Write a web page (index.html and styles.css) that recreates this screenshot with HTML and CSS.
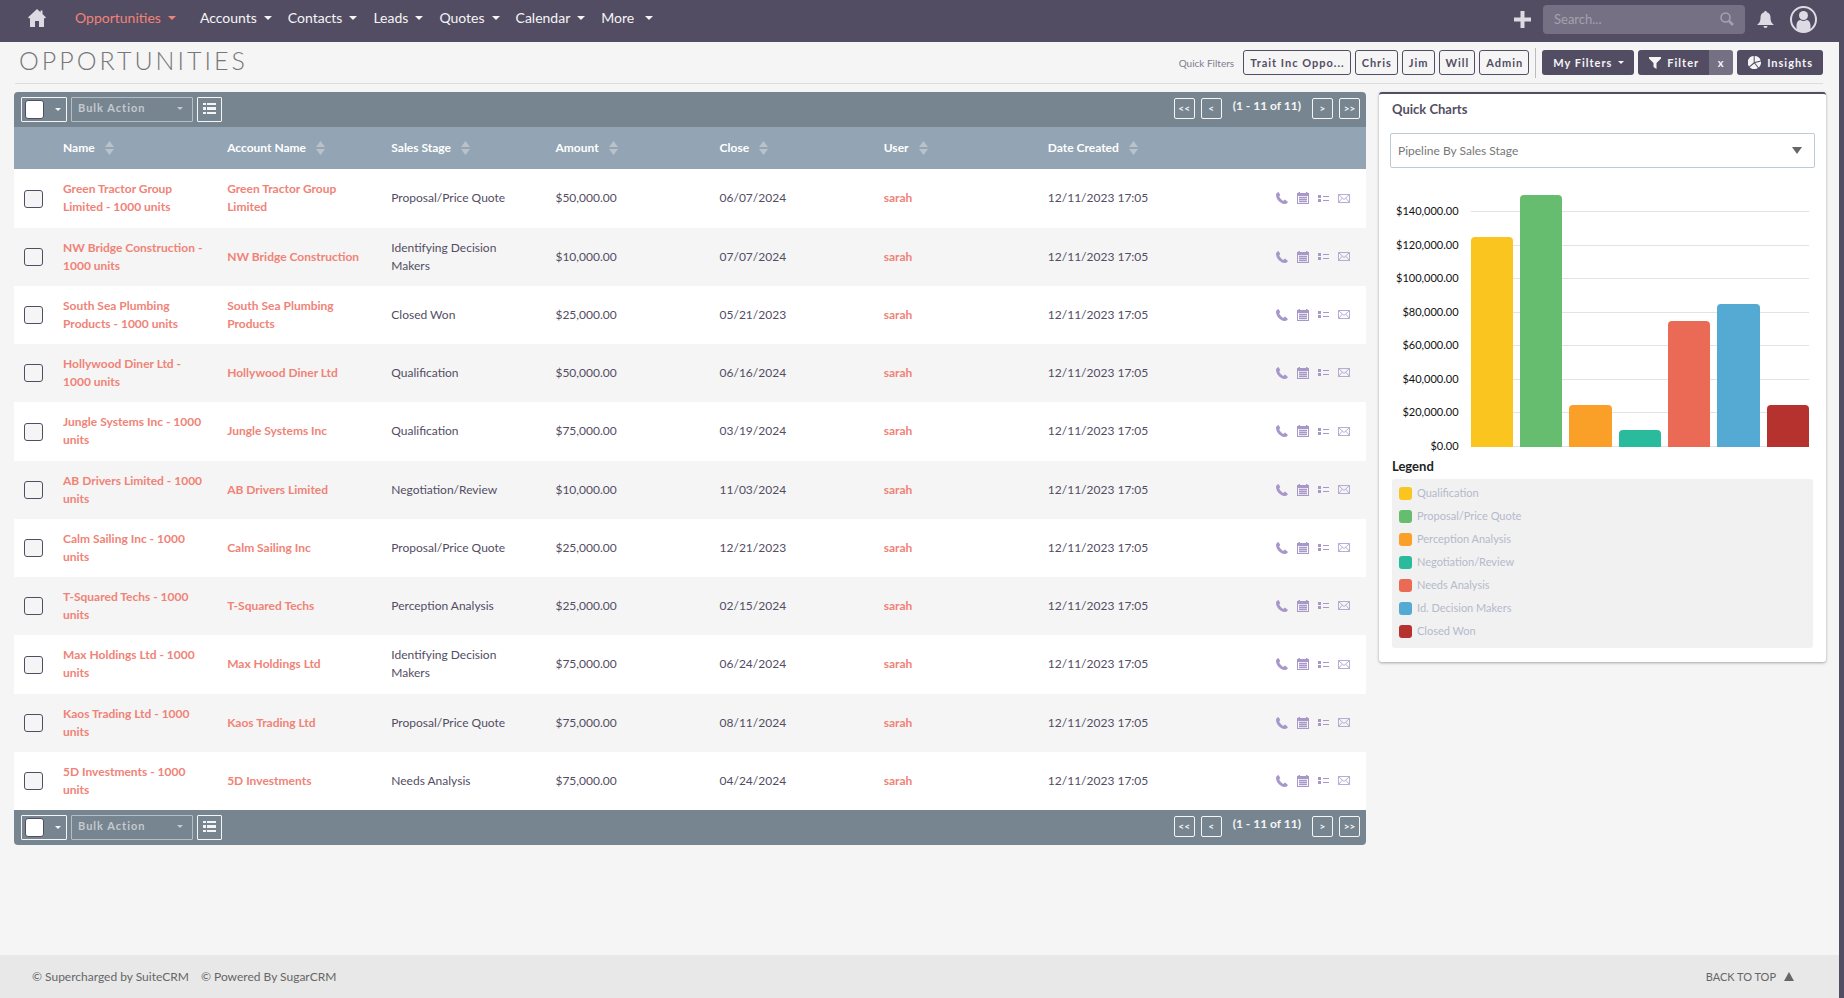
FILE: index.html
```html
<!DOCTYPE html>
<html lang="en">
<head>
<meta charset="utf-8">
<title>Opportunities</title>
<link rel="stylesheet" href="styles.css">
</head>
<body>
<svg class="sprite" aria-hidden="true">
  <symbol id="i-caret" viewBox="0 0 8 4"><path d="M0 0h8L4 4z"/></symbol>
  <symbol id="i-sort" viewBox="0 0 9 14"><path d="M4.500 0L9 6H0zM0 8h9L4.500 14z"/></symbol>
  <symbol id="i-list" viewBox="0 0 13 12"><path d="M0 0h3v2H0zM4 0h9v2H4zM0 4h3v3H0zM4 4h9v3H4zM0 9h3v2H0zM4 9h9v2H4z"/></symbol>
  <symbol id="i-phone" viewBox="0 0 12 12"><path d="M2.500 0C1 .6 0 1.500 0 3c.3 4.500 4 8.500 8.500 9 1.600.1 2.700-.6 3.500-2L9 7.600 7.200 8.900C5.500 8 4 6.300 3.200 4.500L4.300 3z"/></symbol>
  <symbol id="i-cal" viewBox="0 0 12 12"><path fill-rule="evenodd" d="M0 1h1.500V0h1.500v1h6V0h1.500v1H12v11H0zM1 4v7h10V4z"/><path d="M2 5h8v1H2zM2 7h8v1H2zM2 9h8v1H2z"/><path opacity=".5" d="M2 4.500h8v6H2z"/></symbol>
  <symbol id="i-task" viewBox="0 0 11 7"><path d="M0 0h3v3H0zM0 4h3v3H0zM5 1h6v1H5zM5 5h6v1H5z"/></symbol>
  <symbol id="i-mail" viewBox="0 0 12 9"><path fill="none" stroke="currentColor" stroke-width=".8" d="M.5.500h11v8H.500zM.5.500L6 5.500 11.500.500M.5 8.500l3.700-4.300M11.500 8.500L7.800 4.200"/></symbol>
</svg>

<header class="navbar">
  <a class="home" href="#" aria-label="Home"><svg viewBox="0 0 18 18"><path d="M9 0L0 8.500 1.200 9.500 2 9v9h5v-6h4v6h5V9l.8.500L18 8.500 14.500 5V1.500h-2v1.800z"/></svg></a>
  <nav class="menu">
    <a class="active" href="#">Opportunities<svg class="caret"><use href="#i-caret"/></svg></a>
    <a href="#">Accounts<svg class="caret"><use href="#i-caret"/></svg></a>
    <a href="#">Contacts<svg class="caret"><use href="#i-caret"/></svg></a>
    <a href="#">Leads<svg class="caret"><use href="#i-caret"/></svg></a>
    <a href="#">Quotes<svg class="caret"><use href="#i-caret"/></svg></a>
    <a href="#">Calendar<svg class="caret"><use href="#i-caret"/></svg></a>
    <a class="more" href="#">More<svg class="caret"><use href="#i-caret"/></svg></a>
  </nav>
  <div class="tools">
    <button class="icon-btn" aria-label="Create"><svg width="17" height="17" viewBox="0 0 17 17"><path d="M6.500 0h4v6.500H17v4h-6.500V17h-4v-6.500H0v-4h6.500z"/></svg></button>
    <div class="search">
      <input type="text" aria-label="Search" placeholder="Search...">
      <svg width="14" height="14" viewBox="0 0 14 14"><circle cx="5.500" cy="5.500" r="4.500" fill="none" stroke="currentColor" stroke-width="1.500"/><path d="M9 9l4 4" stroke="currentColor" stroke-width="2.500"/></svg>
    </div>
    <button class="icon-btn bell" aria-label="Notifications"><svg width="17" height="17" viewBox="0 0 17 17"><path d="M8.500 0c.8 0 1.300.5 1.300 1.200C12.500 2 13.500 4 13.500 6.500c0 4 1 5.500 3.500 7.500H0c2.500-2 3.500-3.500 3.500-7.500 0-2.500 1-4.500 3.700-5.300C7.200.5 7.700 0 8.500 0zM6.500 15h4c0 1.300-.8 2-2 2s-2-.7-2-2z"/></svg></button>
    <button class="icon-btn" aria-label="User"><svg width="27" height="27" viewBox="0 0 27 27"><circle cx="13.500" cy="13.500" r="12.500" fill="none" stroke="currentColor" stroke-width="2"/><circle cx="13.500" cy="9.500" r="4.500"/><path d="M6.500 24v-4c0-4 2-6 4-6 2 1.200 4 1.200 6 0 2 0 4 2 4 6v4c-4 3-10 3-14 0z"/></svg></button>
  </div>
</header>

<main class="page">
  <div class="titlebar">
    <h1>OPPORTUNITIES</h1>
    <div class="filters">
      <span class="filters-label">Quick Filters</span>
      <button class="chip">Trait Inc Oppo...</button>
      <button class="chip">Chris</button>
      <button class="chip">Jim</button>
      <button class="chip">Will</button>
      <button class="chip">Admin</button>
      <span class="divider"></span>
      <button class="solid">My Filters<svg class="caret small"><use href="#i-caret"/></svg></button>
      <div class="split">
        <button class="solid"><svg width="12" height="12" viewBox="0 0 12 12"><path d="M0 0h12v1.500L7.500 6v6l-3-2V6L0 1.500z"/></svg>Filter</button>
        <button class="clear">x</button>
      </div>
      <button class="solid"><svg width="13" height="13" viewBox="0 0 13 13"><path d="M5.700 0v6.600L1 10.500A6.500 6.500 0 0 1 5.700 0zM6.700 0A6.500 6.500 0 0 1 12.700 4.500L6.700 6zM13 5.600A6.500 6.500 0 0 1 10.700 11.400L7.200 7zM6.400 7.500l3.500 4.500A6.500 6.500 0 0 1 1.700 11.300z"/></svg>Insights</button>
    </div>
  </div>

  <div class="columns">
    <section class="list">
      <div class="bar top">
        <div class="select-all"><input type="checkbox" aria-label="Select all"><button aria-label="Select options"><svg class="caret small"><use href="#i-caret"/></svg></button></div>
        <button class="bulk">Bulk Action<svg class="caret small"><use href="#i-caret"/></svg></button>
        <button class="cols" aria-label="Column chooser"><svg width="13" height="12"><use href="#i-list"/></svg></button>
        <div class="pager"><button>&lt;&lt;</button><button>&lt;</button><span>(1 - 11 of 11)</span><button>&gt;</button><button>&gt;&gt;</button></div>
      </div>
      <table>
        <thead><tr>
          <th class="check"></th>
          <th>Name<svg class="sort"><use href="#i-sort"/></svg></th>
          <th>Account Name<svg class="sort"><use href="#i-sort"/></svg></th>
          <th>Sales Stage<svg class="sort"><use href="#i-sort"/></svg></th>
          <th>Amount<svg class="sort"><use href="#i-sort"/></svg></th>
          <th>Close<svg class="sort"><use href="#i-sort"/></svg></th>
          <th>User<svg class="sort"><use href="#i-sort"/></svg></th>
          <th>Date Created<svg class="sort"><use href="#i-sort"/></svg></th>
          <th class="last"></th>
        </tr></thead>
        <tbody>
          <tr><td class="check"><input type="checkbox" aria-label="Select row"></td><td><a href="#">Green Tractor Group Limited - 1000 units</a></td><td><a href="#">Green Tractor Group Limited</a></td><td>Proposal/Price Quote</td><td>$50,000.00</td><td>06/07/2024</td><td><a href="#">sarah</a></td><td>12/11/2023 17:05</td><td><div class="acts"><svg width="12" height="12"><use href="#i-phone"/></svg><svg width="12" height="12"><use href="#i-cal"/></svg><svg width="11" height="7"><use href="#i-task"/></svg><svg width="12" height="9"><use href="#i-mail"/></svg></div></td></tr>
          <tr><td class="check"><input type="checkbox" aria-label="Select row"></td><td><a href="#">NW Bridge Construction - 1000 units</a></td><td><a href="#">NW Bridge Construction</a></td><td>Identifying Decision Makers</td><td>$10,000.00</td><td>07/07/2024</td><td><a href="#">sarah</a></td><td>12/11/2023 17:05</td><td><div class="acts"><svg width="12" height="12"><use href="#i-phone"/></svg><svg width="12" height="12"><use href="#i-cal"/></svg><svg width="11" height="7"><use href="#i-task"/></svg><svg width="12" height="9"><use href="#i-mail"/></svg></div></td></tr>
          <tr><td class="check"><input type="checkbox" aria-label="Select row"></td><td><a href="#">South Sea Plumbing Products - 1000 units</a></td><td><a href="#">South Sea Plumbing Products</a></td><td>Closed Won</td><td>$25,000.00</td><td>05/21/2023</td><td><a href="#">sarah</a></td><td>12/11/2023 17:05</td><td><div class="acts"><svg width="12" height="12"><use href="#i-phone"/></svg><svg width="12" height="12"><use href="#i-cal"/></svg><svg width="11" height="7"><use href="#i-task"/></svg><svg width="12" height="9"><use href="#i-mail"/></svg></div></td></tr>
          <tr><td class="check"><input type="checkbox" aria-label="Select row"></td><td><a href="#">Hollywood Diner Ltd - 1000 units</a></td><td><a href="#">Hollywood Diner Ltd</a></td><td>Qualification</td><td>$50,000.00</td><td>06/16/2024</td><td><a href="#">sarah</a></td><td>12/11/2023 17:05</td><td><div class="acts"><svg width="12" height="12"><use href="#i-phone"/></svg><svg width="12" height="12"><use href="#i-cal"/></svg><svg width="11" height="7"><use href="#i-task"/></svg><svg width="12" height="9"><use href="#i-mail"/></svg></div></td></tr>
          <tr><td class="check"><input type="checkbox" aria-label="Select row"></td><td><a href="#">Jungle Systems Inc - 1000 units</a></td><td><a href="#">Jungle Systems Inc</a></td><td>Qualification</td><td>$75,000.00</td><td>03/19/2024</td><td><a href="#">sarah</a></td><td>12/11/2023 17:05</td><td><div class="acts"><svg width="12" height="12"><use href="#i-phone"/></svg><svg width="12" height="12"><use href="#i-cal"/></svg><svg width="11" height="7"><use href="#i-task"/></svg><svg width="12" height="9"><use href="#i-mail"/></svg></div></td></tr>
          <tr><td class="check"><input type="checkbox" aria-label="Select row"></td><td><a href="#">AB Drivers Limited - 1000 units</a></td><td><a href="#">AB Drivers Limited</a></td><td>Negotiation/Review</td><td>$10,000.00</td><td>11/03/2024</td><td><a href="#">sarah</a></td><td>12/11/2023 17:05</td><td><div class="acts"><svg width="12" height="12"><use href="#i-phone"/></svg><svg width="12" height="12"><use href="#i-cal"/></svg><svg width="11" height="7"><use href="#i-task"/></svg><svg width="12" height="9"><use href="#i-mail"/></svg></div></td></tr>
          <tr><td class="check"><input type="checkbox" aria-label="Select row"></td><td><a href="#">Calm Sailing Inc - 1000 units</a></td><td><a href="#">Calm Sailing Inc</a></td><td>Proposal/Price Quote</td><td>$25,000.00</td><td>12/21/2023</td><td><a href="#">sarah</a></td><td>12/11/2023 17:05</td><td><div class="acts"><svg width="12" height="12"><use href="#i-phone"/></svg><svg width="12" height="12"><use href="#i-cal"/></svg><svg width="11" height="7"><use href="#i-task"/></svg><svg width="12" height="9"><use href="#i-mail"/></svg></div></td></tr>
          <tr><td class="check"><input type="checkbox" aria-label="Select row"></td><td><a href="#">T-Squared Techs - 1000 units</a></td><td><a href="#">T-Squared Techs</a></td><td>Perception Analysis</td><td>$25,000.00</td><td>02/15/2024</td><td><a href="#">sarah</a></td><td>12/11/2023 17:05</td><td><div class="acts"><svg width="12" height="12"><use href="#i-phone"/></svg><svg width="12" height="12"><use href="#i-cal"/></svg><svg width="11" height="7"><use href="#i-task"/></svg><svg width="12" height="9"><use href="#i-mail"/></svg></div></td></tr>
          <tr><td class="check"><input type="checkbox" aria-label="Select row"></td><td><a href="#">Max Holdings Ltd - 1000 units</a></td><td><a href="#">Max Holdings Ltd</a></td><td>Identifying Decision Makers</td><td>$75,000.00</td><td>06/24/2024</td><td><a href="#">sarah</a></td><td>12/11/2023 17:05</td><td><div class="acts"><svg width="12" height="12"><use href="#i-phone"/></svg><svg width="12" height="12"><use href="#i-cal"/></svg><svg width="11" height="7"><use href="#i-task"/></svg><svg width="12" height="9"><use href="#i-mail"/></svg></div></td></tr>
          <tr><td class="check"><input type="checkbox" aria-label="Select row"></td><td><a href="#">Kaos Trading Ltd - 1000 units</a></td><td><a href="#">Kaos Trading Ltd</a></td><td>Proposal/Price Quote</td><td>$75,000.00</td><td>08/11/2024</td><td><a href="#">sarah</a></td><td>12/11/2023 17:05</td><td><div class="acts"><svg width="12" height="12"><use href="#i-phone"/></svg><svg width="12" height="12"><use href="#i-cal"/></svg><svg width="11" height="7"><use href="#i-task"/></svg><svg width="12" height="9"><use href="#i-mail"/></svg></div></td></tr>
          <tr><td class="check"><input type="checkbox" aria-label="Select row"></td><td><a href="#">5D Investments - 1000 units</a></td><td><a href="#">5D Investments</a></td><td>Needs Analysis</td><td>$75,000.00</td><td>04/24/2024</td><td><a href="#">sarah</a></td><td>12/11/2023 17:05</td><td><div class="acts"><svg width="12" height="12"><use href="#i-phone"/></svg><svg width="12" height="12"><use href="#i-cal"/></svg><svg width="11" height="7"><use href="#i-task"/></svg><svg width="12" height="9"><use href="#i-mail"/></svg></div></td></tr>
        </tbody>
      </table>
      <div class="bar bottom">
        <div class="select-all"><input type="checkbox" aria-label="Select all"><button aria-label="Select options"><svg class="caret small"><use href="#i-caret"/></svg></button></div>
        <button class="bulk">Bulk Action<svg class="caret small"><use href="#i-caret"/></svg></button>
        <button class="cols" aria-label="Column chooser"><svg width="13" height="12"><use href="#i-list"/></svg></button>
        <div class="pager"><button>&lt;&lt;</button><button>&lt;</button><span>(1 - 11 of 11)</span><button>&gt;</button><button>&gt;&gt;</button></div>
      </div>
    </section>

    <aside class="charts">
      <h2><label for="chart">Quick Charts</label></h2>
      <div class="picker">
        <select id="chart"><option>Pipeline By Sales Stage</option></select>
        <svg width="10" height="7" viewBox="0 0 10 7"><path d="M0 0h10L5 7z"/></svg>
      </div>
      <div class="chart">
        <div class="axis"><span>$140,000.00</span><span>$120,000.00</span><span>$100,000.00</span><span>$80,000.00</span><span>$60,000.00</span><span>$40,000.00</span><span>$20,000.00</span><span>$0.00</span></div>
        <div class="plot">
          <div class="grid"><i></i><i></i><i></i><i></i><i></i><i></i><i></i><i></i></div>
          <div class="bars">
            <div class="c1" style="height:83.33%"></div>
            <div class="c2" style="height:100%"></div>
            <div class="c3" style="height:16.67%"></div>
            <div class="c4" style="height:6.67%"></div>
            <div class="c5" style="height:50%"></div>
            <div class="c6" style="height:56.67%"></div>
            <div class="c7" style="height:16.67%"></div>
          </div>
        </div>
      </div>
      <h3>Legend</h3>
      <ul class="legend">
        <li><i class="c1"></i>Qualification</li>
        <li><i class="c2"></i>Proposal/Price Quote</li>
        <li><i class="c3"></i>Perception Analysis</li>
        <li><i class="c4"></i>Negotiation/Review</li>
        <li><i class="c5"></i>Needs Analysis</li>
        <li><i class="c6"></i>Id. Decision Makers</li>
        <li><i class="c7"></i>Closed Won</li>
      </ul>
    </aside>
  </div>
</main>

<footer class="footer">
  <a href="#">© Supercharged by SuiteCRM</a>
  <a href="#">© Powered By SugarCRM</a>
  <a class="totop" href="#">BACK TO TOP<svg width="10" height="9" viewBox="0 0 10 9"><path d="M5 0l5 9H0z"/></svg></a>
</footer>
</body>
</html>
```
FILE: styles.css
```css
* { box-sizing: border-box; }
body {
  margin: 0;
  min-height: 100vh;
  display: flex;
  flex-direction: column;
  border-right: 5px solid #534d64;
  background: #f5f5f5;
  color: #534d64;
  font: 12px/18px Lato, sans-serif;
}
a { text-decoration: none; color: inherit; }
svg { display: block; fill: currentColor; flex: none; }
button, input, select { font: inherit; color: inherit; margin: 0; }
button { padding: 0; border: 0; background: none; display: flex; align-items: center; justify-content: center; }
.sprite { position: absolute; width: 0; height: 0; }
.caret { width: 8px; height: 4px; }
.caret.small { width: 6px; height: 3px; }

.navbar { height: 42px; background: #534d64; color: #f5f5f5; display: flex; padding: 0 22px 0 28px; }
.home { color: #dddae3; padding-top: 9px; }
.home svg { width: 18px; height: 18px; }
.menu { display: flex; gap: 16px; margin-left: 29px; font-size: 14px; line-height: 35px; }
.menu a { display: flex; align-items: center; gap: 7px; height: 35px; }
.menu .active { color: #f08377; margin-right: 8px; }
.menu .more { gap: 11px; }
.tools { margin-left: auto; display: flex; align-items: center; gap: 12px; height: 39px; }
.icon-btn { color: #dddae3; }
.bell { margin-right: 4px; }
.search { width: 202px; height: 29px; border-radius: 4px; background: #767084; color: #a5a1ae; display: flex; align-items: center; padding: 0 11px 1px; font-size: 13px; }
.search input { flex: 1; min-width: 0; border: 0; padding: 0; background: none; }
.search input::placeholder { color: #a5a1ae; opacity: 1; }

.page { flex: 1; padding: 0 13px 0 14px; }
.titlebar { height: 42px; margin: 0 3px 8px 1px; border-bottom: 1px solid #dcdcdc; display: flex; justify-content: space-between; }
h1 { margin: 0; padding: 0 4px; font-size: 25px; line-height: 36px; font-weight: 300; letter-spacing: 3px; color: #777; }
.filters { display: flex; align-items: center; gap: 4px; height: 41px; }
.filters-label { font-size: 10px; color: #817c8d; margin-right: 5px; }
.chip, .solid, .clear, .bulk { font-size: 11px; font-weight: 700; letter-spacing: 1px; }
.chip { height: 25px; border: 1px solid #534d64; border-radius: 3px; padding: 0 5px 0 6px; }
.divider { width: 1px; height: 30px; background: #bbb; margin: 0 2px; }
.solid { height: 25px; border-radius: 3px; background: #534d64; color: #f5f5f5; padding: 0 10px 0 11px; gap: 6px; }
.split { display: flex; border-radius: 3px; overflow: hidden; }
.split .solid { border-radius: 0; }
.clear { width: 24px; background: #767084; color: #f5f5f5; }

.columns { display: flex; gap: 13px; align-items: flex-start; }
.list { flex: 1; min-width: 0; }
.bar { height: 35px; background: #778591; color: #f5f5f5; display: flex; align-items: center; gap: 4px; padding: 0 6px 1px 7px; }
.top { border-radius: 4px 4px 0 0; }
.bottom { border-radius: 0 0 4px 4px; }
.select-all, .bulk, .cols { height: 25px; border: 1px solid #f5f5f5; border-radius: 1px; }
.select-all { width: 46px; display: flex; align-items: center; justify-content: space-between; padding: 0 5px 0 3px; }
.bulk { width: 122px; justify-content: space-between; padding: 0 9px 2px 6px; border-color: #b6bec5; color: #c4cacf; }
.cols { width: 25px; }
input[type="checkbox"] { appearance: none; display: block; width: 19px; height: 18px; border: 1px solid #534d64; border-radius: 3px; background: #f5f5f5; }
.select-all input[type="checkbox"] { height: 19px; background: #fff; }
.pager { margin-left: auto; display: flex; align-items: center; gap: 6px; padding-bottom: 2px; font-size: 10px; font-weight: 700; }
.pager button { width: 21px; height: 21px; border: 1px solid #f5f5f5; border-radius: 2px; }
.pager span { font-size: 12px; padding: 0 5px 4px; }

table { width: 100%; table-layout: fixed; border-collapse: collapse; }
th, td { text-align: left; vertical-align: middle; padding: 0 8px 1px 12px; }
th { height: 42px; background: #93a5b4; color: #fff; }
.sort { display: inline-block; width: 9px; height: 14px; margin-left: 10px; vertical-align: text-bottom; color: #b9c1c9; }
.check { width: 37px; padding: 0 0 0 10px; }
.last { width: 166px; }
tbody tr { height: 58px; background: #fff; }
tbody tr:nth-child(4n+1) { height: 59px; }
tbody tr:nth-child(even) { background: #f5f5f5; }
td a { color: #f08377; font-weight: 700; }
.acts { display: flex; align-items: center; justify-content: flex-end; gap: 9px; color: #a798c9; padding-right: 8px; }

.charts { width: 447px; background: #fff; border-top: 2px solid #534d64; border-radius: 3px; padding: 6px 11px 14px; box-shadow: 0 1px 3px #0005; }
h2 { margin: 0 2px 15px; font-size: 13px; line-height: 18px; font-weight: 700; }
.picker { position: relative; color: #666; }
.picker select { display: block; appearance: none; width: 100%; height: 35px; border: 1px solid #bccad6; border-radius: 2px; background: #fff; padding: 0 7px; color: #777; }
.picker svg { position: absolute; right: 13px; top: 14px; pointer-events: none; }
.chart { display: flex; justify-content: space-between; gap: 12px; margin: 27px 6px 0 6px; height: 260px; color: #111; font-size: 11px; }
.axis { display: flex; flex-direction: column; justify-content: space-between; text-align: right; line-height: 16px; height: 251px; margin-top: 8px; }
.plot { flex: 1; display: grid; height: 252px; }
.grid, .bars { grid-area: 1 / 1; }
.grid { display: flex; flex-direction: column; justify-content: space-between; padding-top: 16px; }
.grid i { height: 1px; background: #e3e3e3; }
.bars { display: flex; align-items: flex-end; gap: 7px; }
.bars div { flex: 1; border-radius: 4px 4px 0 0; }
.c1 { background: #fbc51f; }
.c2 { background: #67bd6f; }
.c3 { background: #faa028; }
.c4 { background: #2abb9c; }
.c5 { background: #ea6a56; }
.c6 { background: #54aad2; }
.c7 { background: #b5322f; }
h3 { margin: 2px 2px 4px; font-size: 13px; line-height: 18px; font-weight: 700; color: #222; }
.legend { margin: 0 2px; padding: 5px 7px 3px; list-style: none; border-radius: 3px; background: #f1f1f1; color: #b4bacb; font-size: 11px; }
.legend li { display: flex; align-items: center; gap: 5px; height: 23px; padding-bottom: 5px; }
.legend i { width: 13px; height: 13px; border-radius: 3px; }

.footer { height: 43px; background: #e8e8e8; color: #666; display: flex; align-items: center; gap: 12px; padding: 0 45px 0 32px; }
.totop { margin-left: auto; display: flex; align-items: center; gap: 8px; font-size: 11px; }
```
